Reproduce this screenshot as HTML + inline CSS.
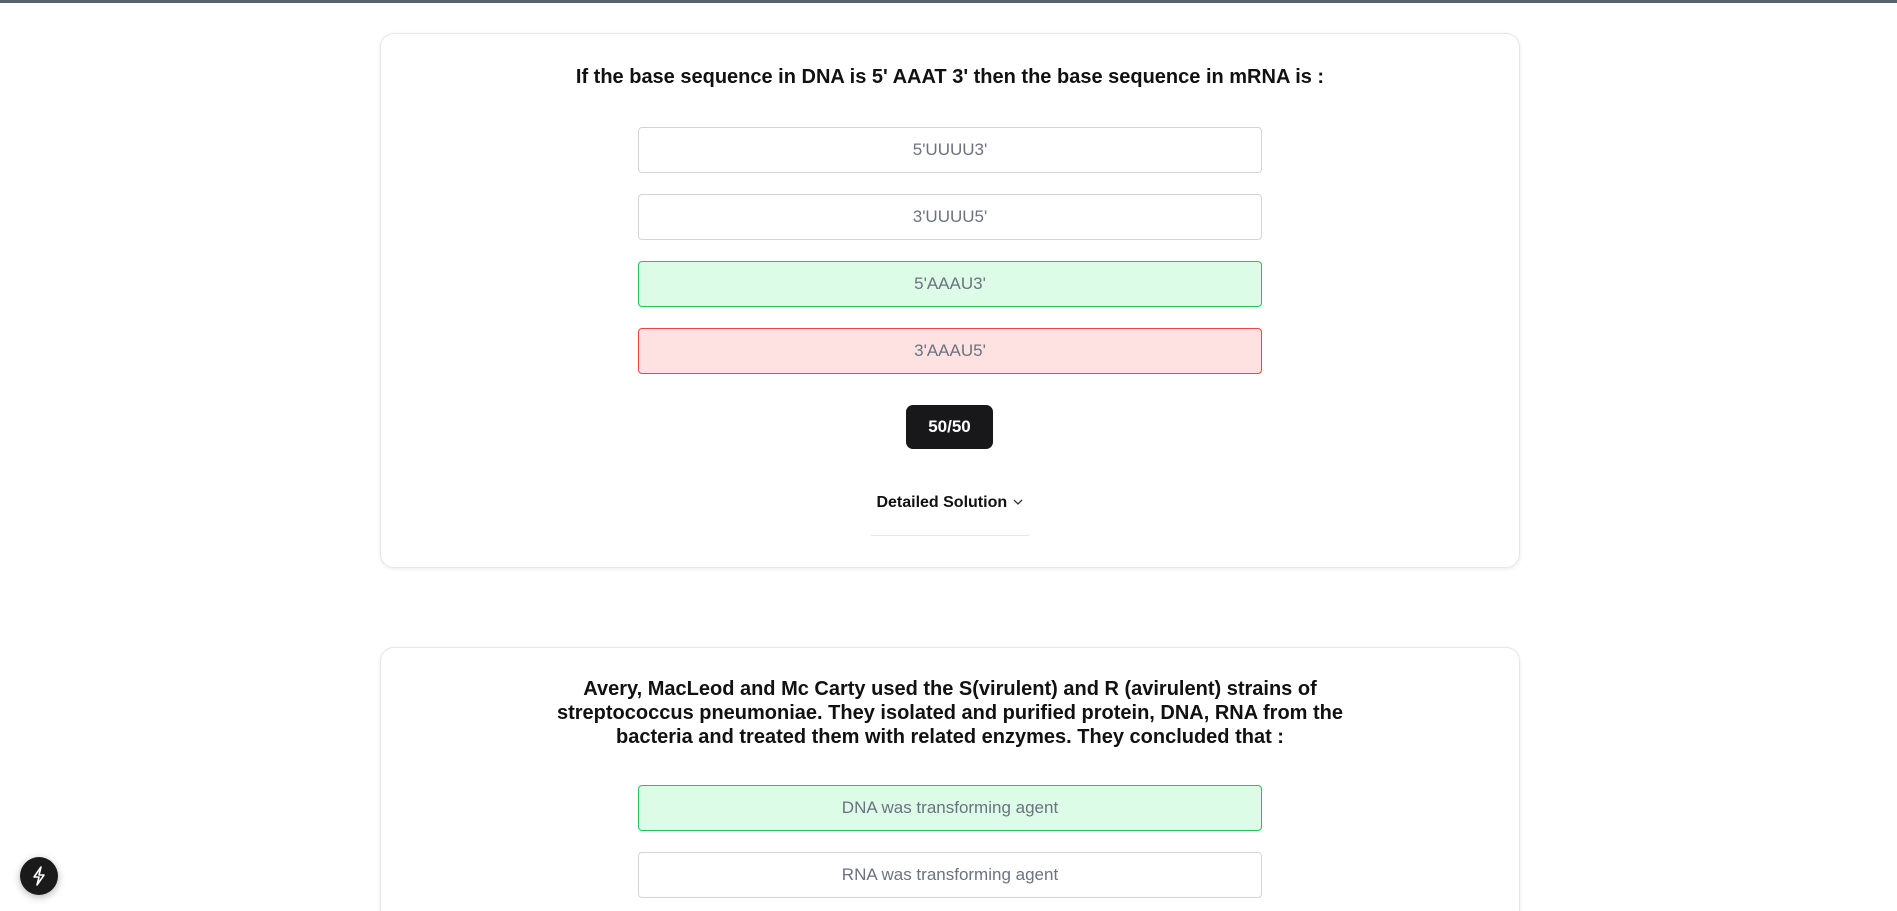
<!DOCTYPE html>
<html style="height:911px;overflow:hidden"><head><style>
body{margin:0;background:#fff;font-family:"Liberation Sans",sans-serif;width:1897px;height:911px;overflow:hidden;position:relative}
.top{position:absolute;top:0;left:0;right:0;height:3px;background:#56636b}
.card{position:absolute;left:380px;width:1138px;border:1px solid #e5e7eb;border-radius:14px;box-shadow:0 1px 4px rgba(0,0,0,.08);background:#fff}
.t{position:absolute;left:0;right:0;text-align:center;font-weight:600;font-size:20px;color:#111;line-height:24px}
.o{position:absolute;left:257px;width:622px;height:44px;border:1px solid #d1d5db;border-radius:4px;text-align:center;line-height:44px;font-size:17px;color:#6b7280}
.g{background:#dcfce7;border-color:#22c55e}
.r{background:#fee2e2;border-color:#ef4444}
.btn{position:absolute;left:525px;top:371px;width:87px;height:44px;background:#18181b;color:#fff;border-radius:7px;text-align:center;line-height:44px;font-weight:700;font-size:17px}
.ds{position:absolute;left:490px;width:158px;top:460px;text-align:center;font-weight:600;font-size:16px;color:#111}
.ln{position:absolute;left:490px;width:158px;top:501px;height:1px;background:#e5e7eb}
.bad{position:absolute;left:20px;top:857px;width:38px;height:38px;border-radius:50%;background:#1a1a1a;box-shadow:0 2px 8px rgba(0,0,0,.3)}
</style></head><body>
<div class="top"></div>
<div class="card" style="top:33px;height:533px">
<div class="t" style="top:31px;font-size:20px">If the base sequence in DNA is 5' AAAT 3' then the base sequence in mRNA is :</div>
<div class="o" style="top:93px">5'UUUU3'</div>
<div class="o" style="top:160px">3'UUUU5'</div>
<div class="o g" style="top:227px">5'AAAU3'</div>
<div class="o r" style="top:294px">3'AAAU5'</div>
<div class="btn">50/50</div>
<div class="ds">Detailed Solution <svg width="12" height="10" viewBox="0 0 12 10"><path d="M2 3l4 4 4-4" stroke="#333" stroke-width="1.3" fill="none"/></svg></div>
<div class="ln"></div>
</div>
<div class="card" style="top:647px;height:290px">
<div class="t" style="top:29px;font-size:20px;white-space:nowrap">Avery, MacLeod and Mc Carty used the S(virulent) and R (avirulent) strains of<br>streptococcus pneumoniae. They isolated and purified protein, DNA, RNA from the<br>bacteria and treated them with related enzymes. They concluded that :</div>
<div class="o g" style="top:137px">DNA was transforming agent</div>
<div class="o" style="top:204px">RNA was transforming agent</div>
</div>
<div class="bad"><svg width="38" height="38" viewBox="0 0 38 38"><path d="M21 10l-7 10h5l-2 8 7-10h-5z" stroke="#fff" stroke-width="1.6" fill="none" stroke-linejoin="round"/></svg></div>
</body></html>
